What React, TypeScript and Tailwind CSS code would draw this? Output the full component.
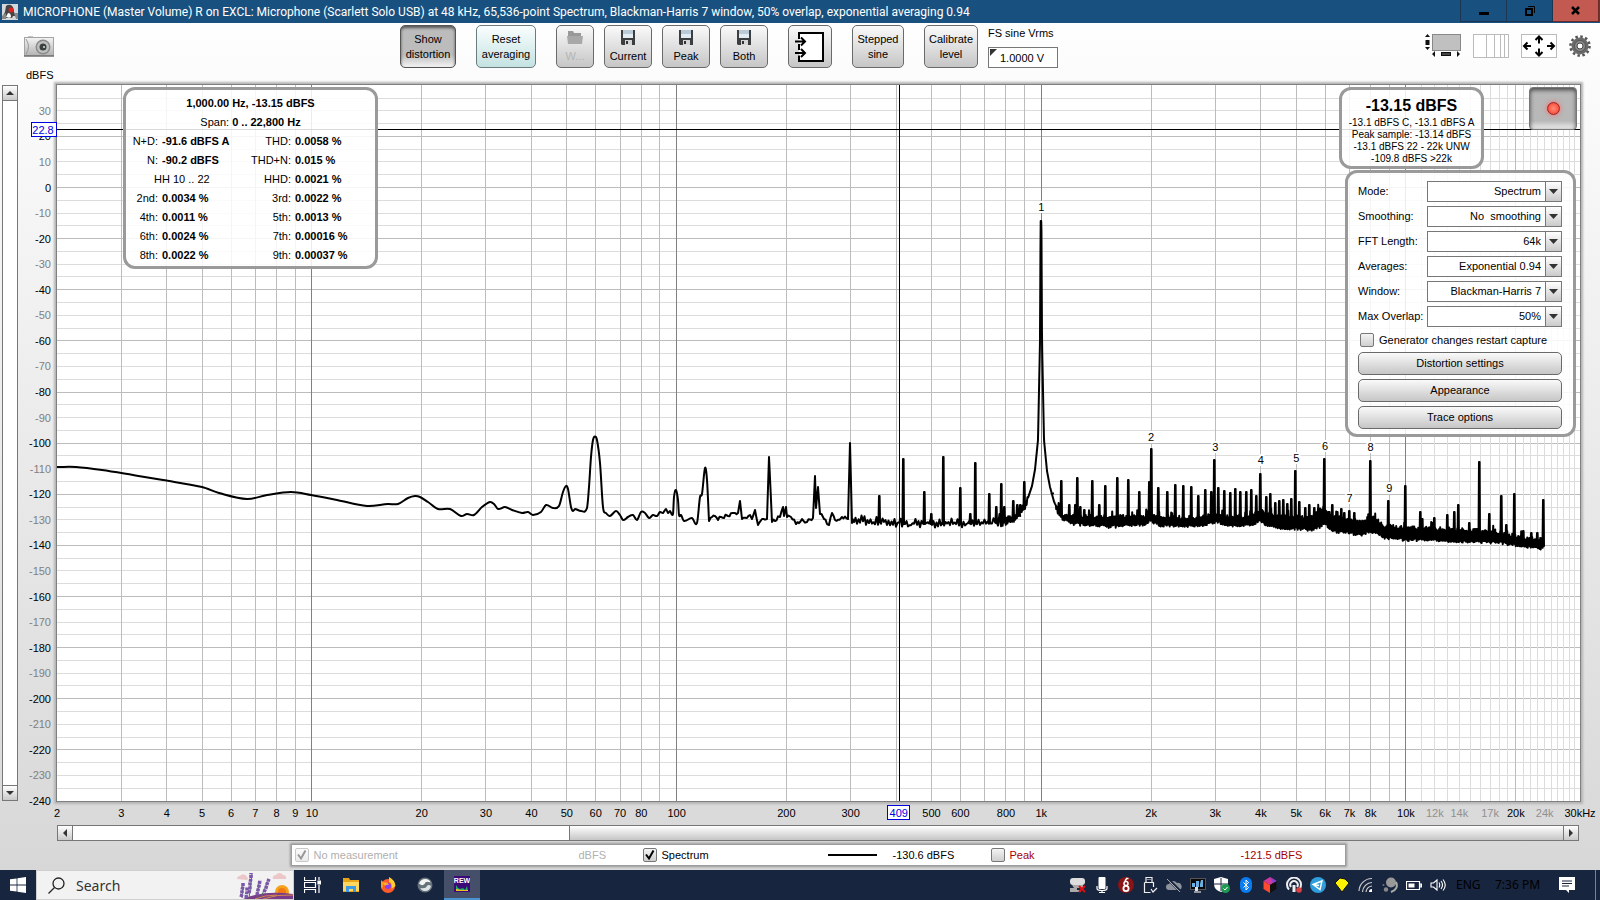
import React from "react";

const F_MIN = 2;
const F_MAX = 30000;
const DB_MAX = 40.1;
const DB_MIN = -240;

const fx = (f: number) => `${(Math.log10(f / F_MIN) / Math.log10(F_MAX / F_MIN)) * 100}%`;
const dy = (db: number) => `${((DB_MAX - db) / (DB_MAX - DB_MIN)) * 100}%`;

const LOW: [number, number][] = [
  [57, 467], [76, 467], [102, 470], [133, 475], [163, 480], [202, 487], [219, 493], [247, 499], [267, 495], [291, 492],
  [311, 495], [337, 500], [367, 506], [388, 504], [398, 504], [408, 498], [415, 496], [420, 497], [428, 502], [438, 509],
  [450, 509], [461, 516], [467, 514], [474, 515], [482, 507], [490, 502], [494, 504], [498, 509], [505, 507], [512, 510],
  [522, 513], [528, 512], [533, 515], [541, 512], [546, 505], [553, 508], [559, 506], [563, 492], [566, 486], [568, 489],
  [571, 507], [573, 511], [575, 509], [581, 511], [587, 508], [589, 487], [591, 457], [593, 440], [595, 436.5], [597, 440],
  [600, 463], [603, 507], [606, 513], [610, 516], [616, 511], [620, 515], [623, 520], [628, 517], [633, 515], [637, 520],
  [641, 512], [645, 513], [649, 518], [653, 515], [657, 516], [660, 512], [663, 513], [666, 509], [668, 513], [670, 511],
  [673, 514], [674, 497], [676, 490], [678, 500], [679, 515], [681, 515], [684, 521], [692, 518], [697, 523], [700, 497],
  [702, 494], [705, 468], [707, 480], [709, 521],
];

const MID: [number, number][] = [
  [709, 521], [712, 517], [715, 516], [718, 520], [721, 517], [728, 516], [735, 513], [738, 513], [740, 501], [742, 519], [747, 518],
  [750, 515], [752, 519], [755, 510], [758, 525], [762, 519], [767, 519], [769, 457], [772, 522], [780, 517], [783, 507],
  [784, 516], [786, 507], [787, 517], [791, 517], [796, 524], [802, 519], [807, 522], [813, 518], [815, 476], [816, 508],
  [818, 487], [820, 514], [824, 519], [829, 525], [832, 513], [835, 520], [842, 517], [848, 519], [850, 443], [852, 523],
];

const BAND: [number, number, number][] = [
  [852, 515, 524], [880, 516, 524], [903, 519, 527], [940, 518, 527], [1000, 518, 526], [1016, 512, 520], [1024, 504, 511],
  [1028, 494, 502], [1032, 483, 489], [1035, 467, 472], [1038, 438, 442], [1040, 340, 342], [1040.6, 221, 221], [1041.4, 221, 221], [1042, 340, 342],
  [1044, 438, 442], [1047, 468, 474], [1050, 484, 490], [1054, 498, 505], [1060, 511, 518], [1070, 514, 524],
  [1110, 515, 527], [1145, 515, 525], [1150, 512, 521], [1160, 515, 526], [1200, 516, 526], [1215, 512, 522], [1225, 515, 525], [1246, 516, 526],
  [1256, 511, 524], [1260, 509, 520], [1266, 511, 525], [1280, 515, 528], [1312, 515, 530], [1320, 508, 527], [1324, 506, 523],
  [1332, 515, 531], [1345, 517, 533], [1362, 520, 535], [1370, 514, 531], [1385, 524, 538], [1405, 526, 540], [1440, 527, 541],
  [1479, 529, 542], [1500, 531, 543], [1520, 535, 546], [1543, 538, 549],
];

const PEAKS: [number, number][] = [
  [879, 496], [903, 459], [924, 492], [931, 514], [943, 457], [960, 488], [970, 514], [975, 463], [989, 494], [996, 507],
  [1001, 484], [1004, 507], [1013, 501], [1017, 505], [1020, 505], [1024, 482], [1052, 494], [1061, 481], [1069, 505],
  [1075, 505], [1077, 478], [1080, 507], [1084, 510], [1092, 481], [1099, 505], [1105, 486], [1117, 478], [1128, 480], [1139, 492],
  [1149, 482], [1151, 449], [1158, 488], [1167, 492], [1175, 485], [1183, 486], [1191, 487], [1198, 496], [1205, 490],
  [1211, 492], [1214, 460], [1218, 488], [1224, 491], [1230, 493], [1235, 489], [1240, 492], [1246, 492], [1251, 490],
  [1256, 496], [1260, 474], [1266, 497], [1270, 494], [1275, 503], [1279, 501], [1283, 500], [1287, 504], [1291, 499],
  [1295, 471], [1299, 502], [1305, 508], [1309, 505], [1314, 508], [1318, 508], [1324, 459], [1329, 512], [1332, 505], [1337, 512], [1341, 509],
  [1344, 513], [1349, 511], [1354, 513], [1370, 461], [1388, 501], [1405, 486], [1420, 512], [1422, 519], [1434, 518], [1447, 515],
  [1454, 512], [1458, 505], [1469, 523], [1479, 462], [1489, 514], [1501, 496], [1506, 525], [1514, 494], [1523, 531], [1531, 533], [1537, 533],
  [1543, 500],
];

function random(seed: number) {
  let s = seed;
  return () => {
    s = (s * 1664525 + 1013904223) % 4294967296;
    return s / 4294967296;
  };
}

function buildTrace() {
  const rnd = random(11);
  let d = `M${LOW[0][0]} ${LOW[0][1]}`;
  for (let i = 0; i < LOW.length - 1; i++) {
    const p0 = LOW[Math.max(0, i - 1)];
    const p1 = LOW[i];
    const p2 = LOW[i + 1];
    const p3 = LOW[Math.min(LOW.length - 1, i + 2)];
    const m1 = i === 0 ? 0 : (p2[1] - p0[1]) / (p2[0] - p0[0]);
    const m2 = p3[0] === p1[0] ? 0 : (p3[1] - p1[1]) / (p3[0] - p1[0]);
    const h = (p2[0] - p1[0]) / 3;
    d += `C${p1[0] + h} ${p1[1] + m1 * h} ${p2[0] - h} ${p2[1] - m2 * h} ${p2[0]} ${p2[1]}`;
  }
  for (let i = 0; i < MID.length - 1; i++) {
    const [x1, y1] = MID[i];
    const [x2, y2] = MID[i + 1];
    if (x2 - x1 > 2) {
      for (let x = x1 + 1.5; x < x2 - 1; x += 1.5) {
        d += `L${x} ${y1 + ((y2 - y1) * (x - x1)) / (x2 - x1) + (rnd() - 0.5) * 4}`;
      }
    }
    d += `L${x2} ${y2}`;
  }
  let k = 0;
  let p = 0;
  let up = true;
  let x = 852.5;
  while (x < 1543.5) {
    while (k < BAND.length - 2 && BAND[k + 1][0] <= x) k++;
    const a = BAND[k];
    const b = BAND[k + 1];
    const t = Math.min(1, (x - a[0]) / (b[0] - a[0]));
    const top = a[1] + (b[1] - a[1]) * t;
    const bot = a[2] + (b[2] - a[2]) * t;
    const sharp = x > 1028 && x < 1056;
    const sparse = x < 1000;
    const amp = sparse ? 5 : 3;
    const spike = !sharp && x > 960 && rnd() > 0.93 ? 5 : 0;
    if (sharp) d += `L${x.toFixed(2)} ${((top + bot) / 2).toFixed(1)}`;
    else d += `L${x.toFixed(1)} ${(up ? top + rnd() * amp * 1.3 - spike : bot - rnd() * amp + 1).toFixed(1)}`;
    if (p < PEAKS.length && PEAKS[p][0] <= x + 0.5) {
      const [px, py] = PEAKS[p++];
      d += `L${px - 0.5} ${bot - 3}L${px} ${py}L${px + 0.6} ${py}L${px + 1} ${bot - 3}`;
    }
    up = !up;
    x += sharp ? 0.25 : sparse ? 1.5 : x < 1100 ? 0.8 : 0.5;
  }
  return d;
}

const TRACE = buildTrace();

const majorFreqs = [3, 4, 5, 6, 7, 8, 9, 20, 30, 40, 50, 60, 70, 80, 90, 200, 300, 400, 500, 600, 700, 800, 900, 2000, 3000, 4000, 5000, 6000, 7000, 8000, 9000, 20000];
const minorFreqs = [11, 12, 13, 14, 15, 16, 17, 18, 19, 21, 22, 23, 24, 25, 26, 27, 28, 29].map((k) => k * 1000);
const dbLines = Array.from({ length: 55 }, (_, i) => 35 - i * 5);
const dbLabels = Array.from({ length: 28 }, (_, i) => 30 - i * 10);

const freqLabels: [number, string, boolean?][] = [
  [2, "2"], [3, "3"], [4, "4"], [5, "5"], [6, "6"], [7, "7"], [8, "8"], [9, "9"], [10, "10"], [20, "20"], [30, "30"],
  [40, "40"], [50, "50"], [60, "60"], [70, "70"], [80, "80"], [100, "100"], [200, "200"], [300, "300"], [500, "500"],
  [600, "600"], [800, "800"], [1000, "1k"], [2000, "2k"], [3000, "3k"], [4000, "4k"], [5000, "5k"], [6000, "6k"],
  [7000, "7k"], [8000, "8k"], [10000, "10k"], [12000, "12k", true], [14000, "14k", true], [17000, "17k", true],
  [20000, "20k"], [24000, "24k", true], [30000, "30kHz"],
];

const harmonics: [number, number][] = [[1, -9], [2, -99], [3, -103], [4, -108], [5, -107.5], [6, -102.5], [7, -123], [8, -103], [9, -119]];

function Chart() {
  return (
    <svg className="block h-full w-full overflow-visible" fontFamily="Liberation Sans, Arial, sans-serif" fontSize="11" role="img" aria-label="Spectrum">
      <g strokeWidth="1" shapeRendering="crispEdges">
        {dbLines.map((db) => (
          <line key={db} x1="0" x2="100%" y1={dy(db)} y2={dy(db)} stroke={db % 20 === 0 ? "#bcbcbc" : "#dcdcdc"} />
        ))}
        {minorFreqs.map((f) => (
          <line key={f} x1={fx(f)} x2={fx(f)} y1="0" y2="100%" stroke="#dcdcdc" />
        ))}
        {majorFreqs.map((f) => (
          <line key={f} x1={fx(f)} x2={fx(f)} y1="0" y2="100%" stroke="#bcbcbc" />
        ))}
        {[10, 100, 1000, 10000].map((f) => (
          <line key={f} x1={fx(f)} x2={fx(f)} y1="0" y2="100%" stroke="#808080" />
        ))}
      </g>
      <svg width="100%" height="100%" viewBox="57 85 1523 716" preserveAspectRatio="none">
        <path d={TRACE} fill="none" stroke="#000" strokeWidth="2" strokeLinejoin="round" vectorEffect="non-scaling-stroke" />
      </svg>
      {harmonics.map(([n, db]) => (
        <text key={n} x={fx(n * 1000)} y={dy(db)} textAnchor="middle" stroke="#fff" strokeWidth="4" paintOrder="stroke">{n}</text>
      ))}
      <g stroke="#000" shapeRendering="crispEdges">
        <line x1="0" x2="100%" y1={dy(22.8)} y2={dy(22.8)} />
        <line x1={fx(409)} x2={fx(409)} y1="0" y2="100%" />
      </g>
      {dbLabels.map((db) => (
        <text key={db} x="-6" y={dy(db)} dy="4" textAnchor="end" fill={db % 20 === 0 ? "#000" : "#808080"}>{db}</text>
      ))}
      {freqLabels.map(([f, label, grey]) => (
        <svg key={f} x={fx(f)} y="100%" overflow="visible">
          <text x="0" y="16" textAnchor="middle" fill={grey ? "#909090" : "#000"}>{label}</text>
        </svg>
      ))}
      <svg x="0" y={dy(22.8)} overflow="visible">
        <rect x="-26" y="-7" width="25" height="14" fill="#fff" stroke="#0000e0" shapeRendering="crispEdges" />
        <text x="-14" y="5" textAnchor="middle" fill="#0000e0">22.8</text>
      </svg>
      <svg x={fx(409)} y="100%" overflow="visible">
        <rect x="-12" y="4" width="22" height="14" fill="#fff" stroke="#0000e0" shapeRendering="crispEdges" />
        <text x="-1" y="16" textAnchor="middle" fill="#0000e0">409</text>
      </svg>
    </svg>
  );
}

const toolButton =
  "flex h-[43px] flex-col items-center justify-center rounded-[5px] border border-[#6a6a6a] bg-linear-to-b from-[#fafafa] to-[#c6c6c6] text-[11px] leading-[15px]";

function Floppy() {
  return (
    <svg width="14" height="15" viewBox="0 0 14 15" aria-hidden="true">
      <path d="M0 0h14v15H1L0 14z" fill="#3c3f42" />
      <path d="M2 0h10v8H2z" fill="#e4ecf3" />
      <path d="M2 0h10v4H2z" fill="#b9cbd8" />
      <path d="M4 10h7v5H4z" fill="#d5d5d5" />
      <path d="M5 11h2v3H5z" fill="#333" />
    </svg>
  );
}

function Toolbar() {
  return (
    <div className="flex items-start pt-[2px]">
      <button className="mt-[10px] ml-6" aria-label="Capture image">
        <svg width="30" height="22" viewBox="0 0 30 22">
          <defs>
            <linearGradient id="cam" x1="0" y1="0" x2="0" y2="1">
              <stop offset="0" stopColor="#f4f4f4" />
              <stop offset="1" stopColor="#b4b4b4" />
            </linearGradient>
          </defs>
          <path d="M4 3V1h5v2z" fill="#c4c4c4" />
          <rect x="0.5" y="2.5" width="29" height="18" fill="url(#cam)" stroke="#a4a4a4" />
          <path d="M0 21h30" stroke="#707070" strokeWidth="1.5" />
          <path d="M2 4q5 8 0 15" fill="none" stroke="#999" />
          <circle cx="19" cy="12" r="7.5" fill="#8a8a8a" />
          <circle cx="19" cy="12" r="6" fill="#c0c0c0" />
          <circle cx="19" cy="12" r="3.500" fill="#3a4040" />
          <circle cx="20" cy="12" r="1" fill="#ddd" />
        </svg>
      </button>
      <button className="ml-[346px] flex h-[43px] w-14 flex-col items-center justify-center rounded-[5px] border border-[#555] bg-linear-to-b from-[#bcbcbc] from-70% to-[#f4f4f4] text-[11px] leading-[15px] shadow-[inset_0_2px_3px_#555]">
        <span>Show</span>
        <span>distortion</span>
      </button>
      <button className="ml-5 flex h-[43px] w-[60px] flex-col items-center justify-center rounded-[5px] border border-[#6a7c7c] bg-linear-to-b from-[#fafefe] to-[#c4e2e2] text-[11px] leading-[15px]">
        <span>Reset</span>
        <span>averaging</span>
      </button>
      <button disabled className={`${toolButton} ml-5 w-[38px] gap-1 text-[#b4b4b4]`}>
        <svg width="16" height="15" viewBox="0 0 16 15" aria-hidden="true">
          <path d="M1 1h5l1 2h7v11H1z" fill="#999" />
          <path d="M0 6h16l-1 8H1z" fill="#a8a8a8" />
        </svg>
        <span>W...</span>
      </button>
      <div className="ml-[10px] flex gap-[10px]">
        {["Current", "Peak", "Both"].map((t) => (
          <button key={t} className={`${toolButton} w-12 gap-1`}>
            <Floppy />
            <span>{t}</span>
          </button>
        ))}
      </div>
      <button className={`${toolButton} ml-5 w-11`} aria-label="Input routing">
        <svg width="30" height="32" viewBox="0 0 30 32">
          <path d="M4 2h24v28H4z" fill="#fff" />
          <path d="M4 8V2h24v28H4V24.500M4 13v6" fill="none" stroke="#000" strokeWidth="2" />
          <path d="M0 10.500h10M6 6.500l4 4-4 4M0 22h10M6 18l4 4-4 4" fill="none" stroke="#000" strokeWidth="2" />
        </svg>
      </button>
      <button className={`${toolButton} ml-5 w-[52px]`}>
        <span>Stepped</span>
        <span>sine</span>
      </button>
      <button className={`${toolButton} ml-5 w-[54px]`}>
        <span>Calibrate</span>
        <span>level</span>
      </button>
      <div className="ml-[10px] flex flex-col text-[11px]">
        <label htmlFor="vrms" className="h-[22px] leading-4">FS sine Vrms</label>
        <div className="relative">
          <input id="vrms" defaultValue="1.0000 V" className="h-[21px] w-[70px] border border-[#777] bg-white pl-[11px]" />
          <svg className="absolute top-[2px] left-[2px]" width="7" height="7" viewBox="0 0 7 7" aria-hidden="true">
            <path d="M0 0h7L0 7z" fill="#333" />
          </svg>
        </div>
      </div>
      <div className="mt-2 mr-[9px] ml-auto flex items-start gap-3">
        <button aria-label="Scrollbars">
          <svg width="36" height="25" viewBox="0 0 36 25">
            <rect x="7.500" y="1.500" width="28" height="16" fill="#c0c0c0" stroke="#888" />
            <path d="M0 4l2.500-3L5 4zM0 14h5l-2.500 3zM0.500 7h4v5h-4z" fill="#111" />
            <path d="M10 18v6l-3-3zM32 18v6l3-3zM16 19h10v4H16z" fill="#111" />
            <path d="M17 20h8v2h-8z" fill="#444" />
          </svg>
        </button>
        <button aria-label="Frequency axis">
          <svg width="36" height="25" viewBox="0 0 36 25" fill="none" stroke="#bbb" shapeRendering="crispEdges">
            <rect x="0.500" y="1.500" width="35" height="23" fill="#fff" />
            <path d="M13.500 1v23M21.500 1v23M27.500 1v23M31.500 1v23" />
          </svg>
        </button>
        <button aria-label="Graph limits">
          <svg width="36" height="25" viewBox="0 0 36 25" fill="none">
            <rect x="0.500" y="1.500" width="35" height="23" fill="#fff" stroke="#bbb" />
            <path d="M10 13H3M6.500 9.500L3 13l3.500 3.500M26 13h7M29.500 9.500L33 13l-3.500 3.500M18 10.500V3.500M14.500 7L18 3.500 21.500 7M18 15.500v7M14.500 19l3.500 3.500 3.500-3.500" stroke="#000" strokeWidth="2" />
          </svg>
        </button>
        <button aria-label="Settings">
          <svg width="22" height="24" viewBox="0 0 22 24">
            <circle cx="11" cy="13" r="9.500" fill="none" stroke="#555" strokeWidth="2.600" strokeDasharray="2.500 2.470" />
            <circle cx="11" cy="13" r="8.500" fill="#6a6a6a" />
            <circle cx="11" cy="13" r="5.500" fill="#8c8c8c" stroke="#555" />
            <circle cx="11" cy="13" r="3" fill="#fff" stroke="#444" />
          </svg>
        </button>
      </div>
    </div>
  );
}

const readings: string[][] = [
  ["N+D:", "-91.6 dBFS A", "THD:", "0.0058 %"],
  ["N:", "-90.2 dBFS", "THD+N:", "0.015 %"],
  ["HH 10 .. 22", "", "HHD:", "0.0021 %"],
  ["2nd:", "0.0034 %", "3rd:", "0.0022 %"],
  ["4th:", "0.0011 %", "5th:", "0.0013 %"],
  ["6th:", "0.0024 %", "7th:", "0.00016 %"],
  ["8th:", "0.0022 %", "9th:", "0.00037 %"],
];

function DistortionPanel() {
  return (
    <div className="absolute top-[2px] left-[66px] w-[255px] rounded-xl border-[3px] border-[#9a9a9a] bg-white/85 pt-[4px] pb-px text-[11px]">
      <div className="text-center font-bold leading-[19px]">1,000.00 Hz, -13.15 dBFS</div>
      <div className="text-center leading-[19px]">
        Span: <b>0 .. 22,800 Hz</b>
      </div>
      <table className="w-full table-fixed border-collapse">
        <colgroup>
          <col className="w-[32px]" />
          <col className="w-[76px]" />
          <col className="w-[57px]" />
          <col />
        </colgroup>
        <tbody>
          {readings.map((r) => (
            <tr key={r[0]} className="h-[19px] whitespace-nowrap">
              {r[1] ? (
                <>
                  <td className="p-0 text-right">{r[0]}</td>
                  <td className="p-0 pl-1 font-bold">{r[1]}</td>
                </>
              ) : (
                <td colSpan={2} className="p-0 pl-7">{r[0]}</td>
              )}
              <td className="p-0 text-right">{r[2]}</td>
              <td className="p-0 pl-1 font-bold">{r[3]}</td>
            </tr>
          ))}
        </tbody>
      </table>
    </div>
  );
}

function LevelPanel() {
  return (
    <div className="absolute top-[2px] right-[96px] w-[145px] rounded-xl border-[3px] border-[#9a9a9a] bg-white/85 pt-[5px] pb-px text-center text-[10px] leading-3 whitespace-nowrap">
      <div className="text-[16px] leading-[22px] font-bold">-13.15 dBFS</div>
      <div>-13.1 dBFS C, -13.1 dBFS A</div>
      <div>Peak sample: -13.14 dBFS</div>
      <div>-13.1 dBFS 22 - 22k UNW</div>
      <div>-109.8 dBFS &gt;22k</div>
    </div>
  );
}

const settings: [string, string][] = [
  ["Mode:", "Spectrum"],
  ["Smoothing:", "No\u00a0 smoothing"],
  ["FFT Length:", "64k"],
  ["Averages:", "Exponential 0.94"],
  ["Window:", "Blackman-Harris 7"],
  ["Max Overlap:", "50%"],
];

function Tick({ id, checked, disabled }: { id: string; checked?: boolean; disabled?: boolean }) {
  return (
    <span className={`grid size-[14px] shrink-0 place-items-center ${disabled ? "opacity-40" : ""}`}>
      <input id={id} type="checkbox" defaultChecked={checked} disabled={disabled} className="peer col-start-1 row-start-1 size-[14px] appearance-none rounded-[2px] border border-[#777] bg-linear-to-b from-[#f4f4f4] to-[#cfcfcf]" />
      <svg className="pointer-events-none invisible col-start-1 row-start-1 peer-checked:visible" width="12" height="12" viewBox="0 0 12 12" aria-hidden="true">
        <path d="M2 5.500l3 4L9.500 1.500" fill="none" stroke="#000" strokeWidth="2" />
      </svg>
    </span>
  );
}

function SettingsPanel() {
  return (
    <div className="absolute top-[85px] right-[4px] w-[231px] rounded-xl border-[3px] border-[#9a9a9a] bg-white/85 pt-2 pr-[11px] pb-[5px] pl-[10px] text-[11px]">
      <div className="flex flex-col gap-1">
        {settings.map(([label, value], i) => (
          <div key={label} className="flex h-[21px] items-center justify-between">
            <label htmlFor={`setting-${i}`}>{label}</label>
            <div className="grid h-[21px] w-[135px] items-center">
              <select id={`setting-${i}`} className="col-start-1 row-start-1 h-[21px] appearance-none border border-[#777] bg-white pr-[20px] [text-align-last:right]">
                <option>{value}</option>
              </select>
              <span className="pointer-events-none col-start-1 row-start-1 flex h-[21px] w-[17px] items-center justify-center justify-self-end border border-[#777] bg-linear-to-b from-white to-[#cacaca]">
                <svg width="9" height="5" viewBox="0 0 9 5" aria-hidden="true">
                  <path d="M0 0h9L4.500 5z" fill="#333" />
                </svg>
              </span>
            </div>
          </div>
        ))}
      </div>
      <div className="mt-[5px] flex h-[16px] items-center gap-[5px] pl-[2px]">
        <Tick id="restart" />
        <label htmlFor="restart">Generator changes restart capture</label>
      </div>
      <div className="mt-1 flex flex-col gap-1">
        {["Distortion settings", "Appearance", "Trace options"].map((t) => (
          <button key={t} className="h-[23px] rounded-[5px] border border-[#6a6a6a] bg-linear-to-b from-[#fafafa] to-[#c6c6c6]">{t}</button>
        ))}
      </div>
    </div>
  );
}

function RecordButton() {
  return (
    <button aria-label="Record" className="absolute top-[2px] right-[3px] flex h-[43px] w-12 items-center justify-center rounded-[4px] border border-[#777] bg-[#bdbdbd] bg-linear-to-b from-[#b8b8b8] from-80% to-[#eee] shadow-[inset_0_2px_4px_#444]">
      <span className="size-[13px] rounded-full border border-[#922] bg-radial from-[#ff8a78] to-[#f52a1a] shadow-[0_0_5px_#f66]" />
    </button>
  );
}

const scrollButton = "flex size-4 shrink-0 items-center justify-center border border-[#777] bg-linear-to-b from-white to-[#cacaca]";

function Legend() {
  return (
    <div className="flex h-[29px] shrink-0 justify-center pt-1 pb-[5px] pl-9">
      <div className="flex h-5 w-[1053px] items-center bg-white pl-[3px] text-[11px] shadow-[0_0_2px_2px_#999]">
        <Tick id="none" checked disabled />
        <label htmlFor="none" className="ml-[5px] w-[265px] text-[#b0b0b0]">No measurement</label>
        <span className="w-16 text-[#b0b0b0]">dBFS</span>
        <Tick id="spectrum" checked />
        <label htmlFor="spectrum" className="ml-[5px] w-[166px]">Spectrum</label>
        <span className="h-[2px] w-[49px] bg-black" />
        <span className="w-[114px] pl-4">-130.6 dBFS</span>
        <Tick id="peak" />
        <label htmlFor="peak" className="ml-[5px] w-[231px] text-[#a80000]">Peak</label>
        <span className="text-[#a80000]">-121.5 dBFS</span>
      </div>
    </div>
  );
}

const trayIcons: [string, React.ReactNode][] = [
  ["Drive", <><rect x="0" y="1" width="15" height="7" rx="3" fill="#ddd" /><path d="M2 8h11v3H7v2h4v2H0v-4h4z" fill="#aaa" /><path d="M9 9l6 6M15 9l-6 6" stroke="#d11" strokeWidth="2" /></>],
  ["Microphone", <><rect x="4.500" y="0" width="7" height="12" rx="1" fill="#fff" /><path d="M3 9v2.500q0 2 5 2t5-2V9M8 13v3M5 15.500h6" fill="none" stroke="#fff" strokeWidth="1.200" /></>],
  ["Focusrite", <><circle cx="8" cy="8" r="8" fill="#8b1414" /><circle cx="8" cy="6.500" r="2" fill="none" stroke="#fff" strokeWidth="1.500" /><circle cx="8" cy="11.500" r="2.600" fill="none" stroke="#fff" strokeWidth="1.800" /><path d="M8 1.500h2.500M9 1L7 4" stroke="#fff" strokeWidth="1.500" /></>],
  ["Eject device", <><path d="M4 5V0.500h6V5M2.500 5.500h9V10M2.500 5.500V15.500h6M9 12l2 3 4-4M5.500 2.500h1M7.500 2.500h1" fill="none" stroke="#eee" strokeWidth="1.200" /></>],
  ["Cloud", <><path d="M3 13a3 3 0 0 1 0-6 4.500 4.500 0 0 1 8-1 3.500 3.500 0 0 1 2 7z" fill="#8d939c" /><path d="M1 1l14 14" stroke="#1a2742" strokeWidth="3" /><path d="M1 2l13 13" stroke="#aaa" /></>],
  ["Display", <><rect x="0.500" y="1.500" width="15" height="11" fill="#0a0a0a" stroke="#555" /><path d="M2 6h3v4H2zM6 4h3v6H6zM10 7l1-4h2v7h-3z" fill="#6ab0e0" /><path d="M5 10h3v4H5z" fill="#d8e4ee" /><path d="M4 15h7" stroke="#bbb" strokeWidth="1.500" /></>],
  ["Security", <><path d="M7 0l7 2v5q0 6-7 8-7-2-7-8V2z" fill="#fff" /><path d="M7 1v13M0 7h14" stroke="#18253f" /><circle cx="11.500" cy="11.500" r="4.500" fill="#1e9b50" /><path d="M9.500 11.500l1.500 1.500 2.500-3" fill="none" stroke="#fff" /></>],
  ["Bluetooth", <><rect x="2" y="0" width="12" height="16" rx="6" fill="#0a7cf0" /><path d="M5.500 5.500l5 5-2.500 2.500v-10l2.500 2.500-5 5" fill="none" stroke="#fff" /></>],
  ["Cube", <><path d="M1.500 4L8 0l6.500 4L8 8z" fill="#d0389a" /><path d="M1.500 4L8 8v8l-6.500-4z" fill="#ff4a30" /><path d="M14.500 4L8 8v8l6.500-4z" fill="#111" /><path d="M8 0l6.500 4L11 6z" fill="#8a3fd0" /></>],
  ["Audio", <><path d="M3 12.500a7 7 0 1 1 10 0M5 10a3.700 3.700 0 1 1 6 0" fill="none" stroke="#eee" strokeWidth="2" /><path d="M8 8v7" stroke="#eee" strokeWidth="3" /><circle cx="13" cy="13" r="2.800" fill="#e04040" /></>],
  ["Network", <><circle cx="8" cy="8" r="8" fill="#2e9fdc" /><path d="M3 7.500l9-3.500-2 8.500zM3 7.500l6 1" fill="none" stroke="#fff" strokeWidth="1.400" /></>],
  ["Tag", <path d="M1 6l5-5 5 1 4 4-7 9z" fill="#fff200" stroke="#111" />],
  ["Wi-Fi", <><path d="M1 14A13 13 0 0 1 14 1.500M4.500 15A10 10 0 0 1 14 5.500M8 15a7 7 0 0 1 6-6" fill="none" stroke="#ccc" strokeWidth="1.200" /><path d="M11 15a3 3 0 0 1 3-3v3z" fill="#fff" /></>],
  ["Sync", <><circle cx="9" cy="5.500" r="5" fill="#999" /><path d="M14 5q3 7-5 10" fill="none" stroke="#aaa" strokeWidth="2" /><circle cx="4" cy="12.500" r="2.200" fill="#888" /><circle cx="1.500" cy="8" r="1" fill="#777" /></>],
  ["Battery", <><path d="M0.500 4.500h13v8H0.500zM14 7h1.500v3H14z" fill="none" stroke="#fff" strokeWidth="1.200" /><path d="M2.500 6.500h6v4h-6z" fill="#fff" /></>],
  ["Volume", <path d="M1 6v4h2.500L7 13V3L3.500 6zM9 5.500q1.500 2.500 0 5M11 4q3 4 0 8M13 2.500q4.500 5.500 0 11" fill="none" stroke="#fff" strokeWidth="1.100" />],
];

function Taskbar() {
  return (
    <div className="flex h-[30px] shrink-0 items-center bg-[#18253f] font-['Noto_Sans',sans-serif]">
      <button aria-label="Start" className="flex h-full w-9 items-center justify-center">
        <svg width="16" height="16" viewBox="0 0 16 16">
          <path d="M0 2.300L6.600 1.400V7.600H0zM7.400 1.300L16 0v7.600H7.400zM0 8.400h6.600v6.200L0 13.700zM7.400 8.400H16V16l-8.600-1.300z" fill="#fff" />
        </svg>
      </button>
      <label className="flex h-full w-[258px] items-center border border-[#cfcfcf] bg-[#f2f2f2] pl-[11px]">
        <svg width="17" height="17" viewBox="0 0 17 17" fill="none" stroke="#222" strokeWidth="1.300" aria-hidden="true">
          <circle cx="10.500" cy="6.500" r="5.500" />
          <path d="M6.500 10.500L0.500 16.500" />
        </svg>
        <input aria-label="Search" placeholder="Search" className="ml-[11px] w-40 bg-transparent text-[14px] placeholder:text-[#333]" />
        <svg className="ml-auto" width="56" height="28" viewBox="0 0 56 28" aria-hidden="true">
          <path d="M0 8a3 3 0 0 1 3-3 4 4 0 0 1 7 1 2 2 0 0 1 0 3zM36 8a3 3 0 0 1 3-4 4 4 0 0 1 7 0 3 3 0 0 1 3 4z" fill="#ecc6c8" />
          <circle cx="45" cy="21" r="7" fill="#f5a11c" />
          <circle cx="45" cy="21" r="4" fill="#f07a14" />
          <path d="M6 28q20-9 50-5v5z" fill="#7b3a8a" />
          <path d="M26 28q14-5 30-4M18 28q10-4 22-4" fill="none" stroke="#d08a4a" />
          <path d="M5 27l1-14M12 28L15 3M20 27l2-15M24 26l8-18" stroke="#51735b" />
          <path d="M4 26l1-3 0-4 1-4 0-3M12 22l1-5 0-5 1-5 0-5M20 24l1-5 1-4 1-6M27 21l2-4 1-4 2-5M9 27l1-6 0-5" fill="none" stroke="#7a55a8" strokeWidth="3.500" strokeDasharray="3 0.800" />
        </svg>
      </label>
      <div className="flex items-center">
        <button aria-label="Task view" className="flex h-[30px] w-9 items-center justify-center">
          <svg width="17" height="16" viewBox="0 0 17 16" fill="none" stroke="#fff" strokeWidth="1.200">
            <path d="M0.500 0v3.500h11V0M0.500 16v-3.500h11V16M0.500 5.500h11v5h-11zM15 0v3M15 8v8" />
            <path d="M14 4h2.500v3H14z" fill="#fff" />
          </svg>
        </button>
        <button aria-label="File Explorer" className="flex h-[30px] w-[38px] items-center justify-center pl-1">
          <svg width="16" height="14" viewBox="0 0 16 14">
            <path d="M0 0h6l1 2h9v12H0z" fill="#e8a417" />
            <path d="M0 4h16v9H0z" fill="#ffd75e" />
            <path d="M3 14V8h10v6h-3v-3H6v3z" fill="#3d9be6" />
          </svg>
        </button>
        <button aria-label="Firefox" className="flex h-[30px] w-[38px] items-center justify-center pl-[2px]">
          <svg width="16" height="16" viewBox="0 0 16 16">
            <circle cx="8" cy="9" r="7" fill="#ff5a2a" />
            <path d="M9 0q6 3 6.500 9l-4 3q1-6-2.500-7z" fill="#ffcf30" />
            <path d="M1 3l3 3-2 6-1-2z" fill="#ff9a20" />
            <circle cx="8" cy="9" r="3" fill="#8a3ff0" />
            <path d="M3 6q4-2 6 2-3-1-4 1z" fill="#ffb02a" />
          </svg>
        </button>
        <button aria-label="Browser" className="flex h-[30px] w-[38px] items-center justify-center">
          <svg width="16" height="16" viewBox="0 0 16 16">
            <circle cx="8" cy="8" r="7.500" fill="#66737b" />
            <path d="M2 6.500Q4 1.500 9 2q4 0.500 4.500 3.500-5-2-6 1.500-2 2.500-5.500-0.500z" fill="#f4f4f4" />
            <path d="M14 9q-1 5-6 5-4-0.500-4.500-3 5.500 1 6.500-2 1.500-2 4 0z" fill="#dfe4e6" />
          </svg>
        </button>
        <button aria-label="REW" className="flex h-[30px] w-[36px] items-center justify-center border-b-2 border-[#4a93d0] bg-[#454f6a]">
          <svg width="16" height="16" viewBox="0 0 16 16">
            <rect width="16" height="16" fill="#3b0a78" />
            <text x="8" y="7" fontSize="7" fontWeight="700" fontFamily="Liberation Sans, sans-serif" textAnchor="middle" fill="#fff">REW</text>
            <path d="M2 15V9l2 3 2 1 3-1 2 2 2-4 1 5z" fill="#20b060" />
            <path d="M2 15v-2l5 1h7v1z" fill="#f0c020" />
          </svg>
        </button>
      </div>
      <div className="ml-auto flex items-center gap-2">
        {trayIcons.map(([name, icon]) => (
          <button key={name} aria-label={name}>
            <svg width="16" height="16" viewBox="0 0 16 16">{icon}</svg>
          </button>
        ))}
      </div>
      <span className="ml-[10px] w-[39px] text-[12px] text-black">ENG</span>
      <span className="w-16 text-[12px] whitespace-nowrap text-black">7:36 PM</span>
      <button aria-label="Notifications" className="mr-5">
        <svg width="16" height="16" viewBox="0 0 16 16">
          <path d="M0 0h16v13h-6v3l-3-3H0z" fill="#fff" />
          <path d="M3 4h10M3 6.500h10M3 9h7" stroke="#18253f" />
        </svg>
      </button>
      <span className="mr-1 h-full w-px bg-[#7a8294]" />
    </div>
  );
}

export default function App() {
  return (
    <div className="flex h-screen min-h-[600px] min-w-[1400px] flex-col overflow-hidden bg-linear-to-b from-white to-[#d6d6d6] font-['Liberation_Sans',Arial,sans-serif] text-black">
      <header className="flex h-[23px] shrink-0 items-center bg-[#18517f] pl-[2px]">
        <svg width="16" height="16" viewBox="0 0 16 16" aria-hidden="true">
          <rect width="16" height="16" fill="#d4d8da" />
          <path d="M4 2q2-2 5-1 3 2 3 7l2 4-3 0-1 2-3-1-3 1-1-2-2 0 2-4z" fill="#444" />
          <path d="M6 9q3 0 3 4H4z" fill="#fff" />
          <path d="M0 12l4-3v6H0zM12 9h4v6h-2z" fill="#888" />
          <circle cx="9" cy="6" r="2.500" fill="#e02020" />
        </svg>
        <h1 className="ml-[5px] font-[Roboto,sans-serif] text-[12px] whitespace-nowrap text-white">
          MICROPHONE (Master Volume) R on EXCL: Microphone (Scarlett Solo USB) at 48 kHz, 65,536-point Spectrum, Blackman-Harris 7 window, 50% overlap, exponential averaging 0.94
        </h1>
        <div className="ml-auto flex h-[22px] self-start pr-px">
          <button aria-label="Minimize" className="flex w-[47px] items-center justify-center border border-t-0 border-[#1c3550]">
            <svg width="10" height="10" viewBox="0 0 10 10"><path d="M0 6h10v3H0z" /></svg>
          </button>
          <button aria-label="Restore" className="flex w-[46px] items-center justify-center border border-t-0 border-l-0 border-[#1c3550]">
            <svg width="10" height="10" viewBox="0 0 10 10" fill="none" stroke="#000"><path d="M1 3h6v6H1z" strokeWidth="2" /><path d="M3 0.500h6.500V7" /></svg>
          </button>
          <button aria-label="Close" className="flex w-[46px] items-center justify-center border border-t-0 border-l-0 border-[#6a2a2a] bg-[#c25a52]">
            <svg width="9" height="9" viewBox="0 0 9 9" stroke="#000" strokeWidth="2.500"><path d="M1 1l7 7M8 1L1 8" /></svg>
          </button>
        </div>
      </header>
      <Toolbar />
      <div className="h-[17px] shrink-0 pl-[26px] text-[11px] leading-[14px]">dBFS</div>
      <main className="flex min-h-0 flex-1 pr-5 pl-[2px]">
        <div className="flex w-4 shrink-0 flex-col justify-between border border-[#777] bg-white">
          <button aria-label="Scroll up" className="-m-px flex size-4 items-center justify-center border border-[#777] bg-linear-to-b from-white to-[#cacaca]">
            <svg width="8" height="4" viewBox="0 0 8 4"><path d="M0 4l4-4 4 4z" fill="#333" /></svg>
          </button>
          <button aria-label="Scroll down" className="-m-px flex size-4 items-center justify-center border border-[#777] bg-linear-to-b from-white to-[#cacaca]">
            <svg width="8" height="4" viewBox="0 0 8 4"><path d="M0 0l4 4 4-4z" fill="#333" /></svg>
          </button>
        </div>
        <div className="relative ml-[39px] min-w-0 flex-1 bg-white shadow-[0_0_0_1px_#808080,0_0_2px_3px_#b4b4b4]">
          <Chart />
          <DistortionPanel />
          <LevelPanel />
          <RecordButton />
          <SettingsPanel />
        </div>
      </main>
      <div className="mt-6 mr-[21px] ml-[57px] flex h-4 shrink-0">
        <button aria-label="Scroll left" className={scrollButton}>
          <svg width="4" height="8" viewBox="0 0 4 8"><path d="M4 0v8L0 4z" fill="#333" /></svg>
        </button>
        <div className="flex-1 border-y border-[#777] bg-white" />
        <div className="flex-2 border border-r-0 border-[#777] bg-linear-to-b from-white to-[#c6c6c6]" />
        <button aria-label="Scroll right" className={scrollButton}>
          <svg width="4" height="8" viewBox="0 0 4 8"><path d="M0 0v8l4-4z" fill="#333" /></svg>
        </button>
      </div>
      <Legend />
      <Taskbar />
    </div>
  );
}
